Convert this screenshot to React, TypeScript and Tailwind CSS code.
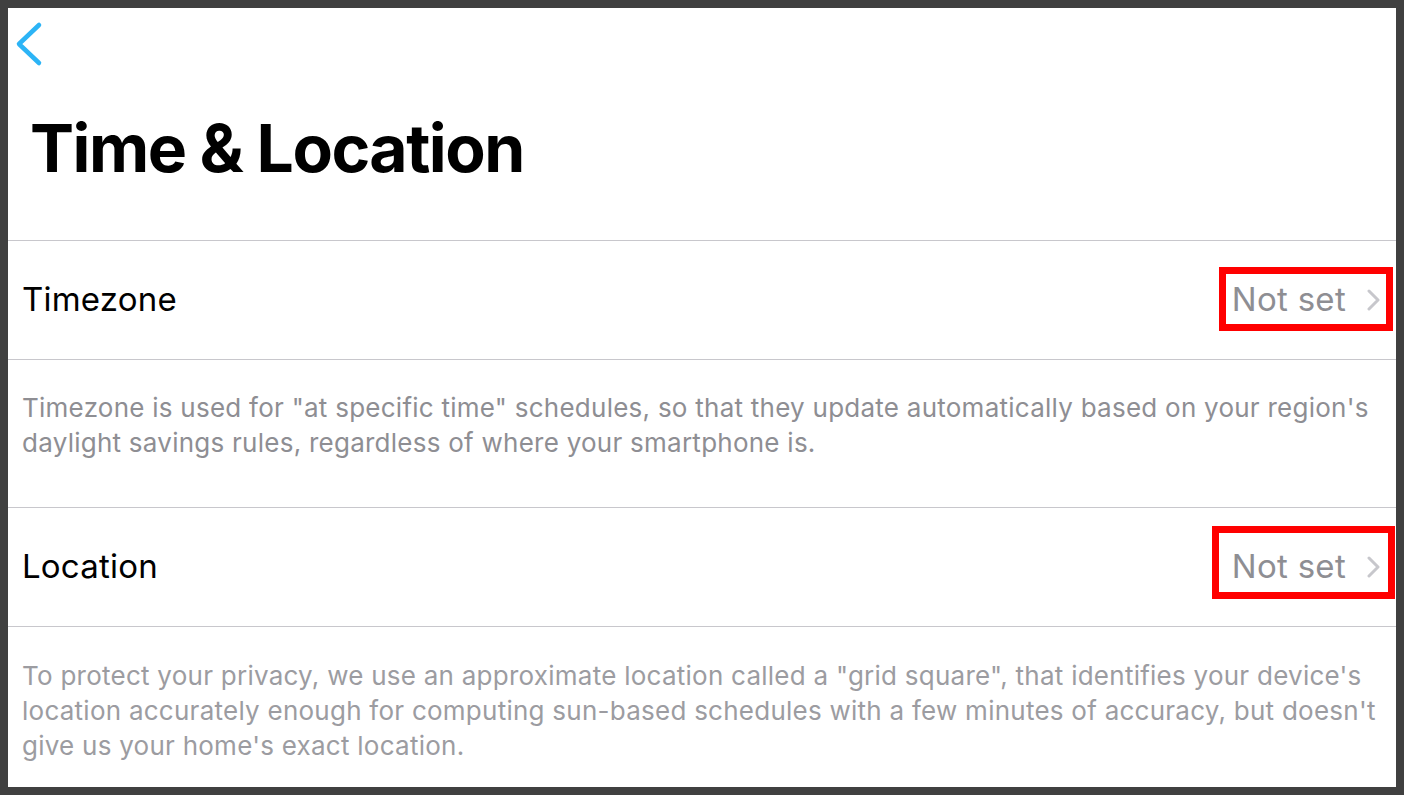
import React from 'react';

// Settings screen: Time & Location, with red annotation boxes over the "Not set" values.

const FONT = { fontFamily: 'Inter, "Noto Sans", sans-serif' };

function BackChevron() {
  return (
    <svg width="30" height="46" viewBox="0 0 30 46" fill="none">
      <polyline
        points="24,4 4,23 24,42"
        stroke="#2cb4f6"
        strokeWidth="4.5"
        strokeLinecap="round"
        strokeLinejoin="round"
      />
    </svg>
  );
}

function RowChevron() {
  return (
    <svg width="16" height="22" viewBox="0 0 16 22" fill="none">
      <polyline
        points="3,2 12,11 3,20"
        stroke="#c7c7cc"
        strokeWidth="3"
        strokeLinecap="round"
        strokeLinejoin="round"
      />
    </svg>
  );
}

function SettingRow({ label, box }: { label: string; box: string }) {
  return (
    <div className="relative h-[118px] flex items-center justify-between pl-[14px] pr-[14px]">
      <span className="text-[33px] text-black tracking-[0.2px]">{label}</span>
      <div className="flex items-center gap-[20px]">
        <span className="text-[33px] text-[#8e8e93] tracking-[0.3px]">Not set</span>
        <RowChevron />
      </div>
      {/* annotation */}
      <div className={`absolute border-[7px] border-[#ff0000] ${box}`} />
    </div>
  );
}

export default function App() {
  return (
    <div className="w-[1404px] h-[795px] bg-[#404040] p-[8px]" style={FONT}>
      <div className="h-full bg-white flex flex-col overflow-hidden">
        {/* Header */}
        <div className="h-[232px] flex flex-col">
          <div className="pt-[13px] pl-[7px]">
            <BackChevron />
          </div>
          <h1 className="mt-[48px] pl-[22px] text-[66px] leading-none font-bold text-black tracking-[-1.5px]">
            Time &amp; Location
          </h1>
        </div>

        <div className="h-px bg-[#c8c7cc]" />
        <SettingRow label="Timezone" box="right-[3px] top-[26px] w-[174px] h-[64px]" />
        <div className="h-px bg-[#c8c7cc]" />

        <div className="h-[147px] pt-[30px] px-[14px]">
          <p className="text-[26px] leading-[35px] text-[#8e8e93] tracking-[0.25px]">
            Timezone is used for "at specific time" schedules, so that they update automatically based on your region's
            daylight savings rules, regardless of where your smartphone is.
          </p>
        </div>

        <div className="h-px bg-[#c8c7cc]" />
        <SettingRow label="Location" box="right-[1px] top-[18px] w-[183px] h-[73px]" />
        <div className="h-px bg-[#c8c7cc]" />

        <div className="flex-1 pt-[31px] px-[14px]">
          <p className="text-[26px] leading-[35px] text-[#9c9ca1] tracking-[0.25px]">
            To protect your privacy, we use an approximate location called a "grid square", that identifies your device's
            location accurately enough for computing sun-based schedules with a few minutes of accuracy, but doesn't
            give us your home's exact location.
          </p>
        </div>
      </div>
    </div>
  );
}
